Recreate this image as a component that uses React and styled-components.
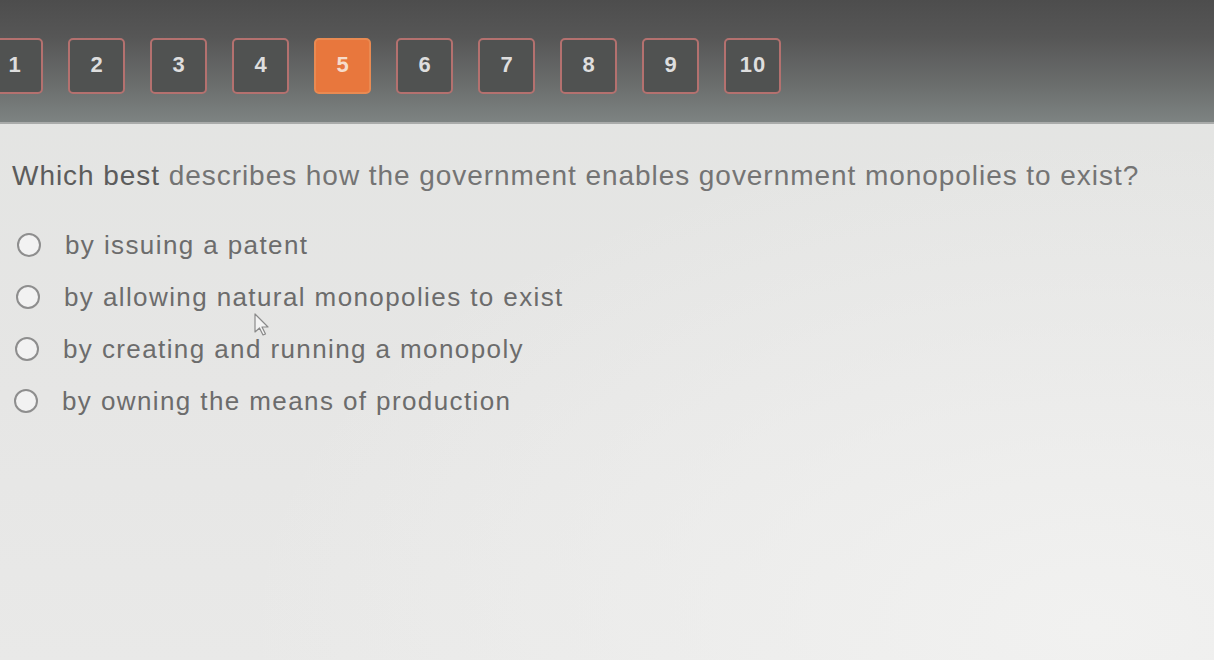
import React from "react";
import styled, { createGlobalStyle } from "styled-components";

const Global = createGlobalStyle`
  html, body { margin: 0; padding: 0; }
  body {
    width: 1214px; height: 660px; overflow: hidden;
    font-family: "Liberation Sans", Arial, sans-serif;
    background: #e4e4e2;
  }
`;

const Page = styled.div`
  position: relative;
  width: 1214px;
  height: 660px;
  display: flex;
  flex-direction: column;
  background:
    radial-gradient(ellipse at 90% 95%, #f1f1f0 0%, rgba(241,241,240,0) 55%),
    linear-gradient(180deg, #e3e4e2 0%, #e6e6e5 60%, #e9e9e8 100%);
`;

const Header = styled.header`
  flex: none;
  background: linear-gradient(180deg, #4d4d4d 0%, #565656 30%, #6b6e6d 70%, #7d8382 100%);
  border-bottom: 2px solid #a9abaa;
  display: flex;
  align-items: flex-start;
  padding-top: 38px;
  box-sizing: border-box;
  height: 124px;
`;

const Nav = styled.nav`
  display: flex;
  gap: 25px;
  margin-left: -14px;
`;

const NumButton = styled.button`
  width: 57px;
  height: 56px;
  box-sizing: border-box;
  border-radius: 5px;
  border: 2px solid ${(p) => (p.$active ? "#e98a52" : "#b4716f")};
  background: ${(p) => (p.$active ? "#e8773d" : "#505251")};
  color: ${(p) => (p.$active ? "#f6dccb" : "#dedede")};
  font-family: "Liberation Sans", Arial, sans-serif;
  font-weight: 700;
  font-size: 22px;
  letter-spacing: 1px;
  display: flex;
  align-items: center;
  justify-content: center;
  padding: 0 0 2px 1px;
`;

const Body = styled.main`
  padding: 35px 0 0 12px;
  display: flex;
  flex-direction: column;
`;

const Question = styled.h1`
  margin: 0;
  font-family: "Liberation Sans", Arial, sans-serif;
  font-weight: 400;
  font-size: 28px;
  line-height: 34px;
  color: #747474;
  letter-spacing: 0.95px;
  white-space: nowrap;
`;

const Dark = styled.span`
  color: #5c5c5c;
`;

const Options = styled.div`
  margin-top: 37px;
  display: flex;
  flex-direction: column;
  gap: 22px;
  margin-left: 5px;
`;

const Option = styled.label`
  display: flex;
  align-items: center;
  gap: 24px;
  height: 30px;
  font-size: 26px;
  color: #6c6c6c;
  letter-spacing: 1.4px;
  white-space: nowrap;
  margin-left: ${(p) => p.$shift || 0}px;
`;

const Radio = styled.span`
  width: 20px;
  height: 20px;
  border-radius: 50%;
  border: 2px solid #8e8e8e;
  background: #f2f2f2;
  flex: none;
`;

const Cursor = styled.svg`
  position: absolute;
  left: 253px;
  top: 312px;
`;

const items = [
  "by issuing a patent",
  "by allowing natural monopolies to exist",
  "by creating and running a monopoly",
  "by owning the means of production",
];

export default function App() {
  return (
    <>
      <Global />
      <Page>
        <Header>
          <Nav>
            {Array.from({ length: 10 }, (_, i) => (
              <NumButton key={i} $active={i === 4}>
                {i + 1}
              </NumButton>
            ))}
          </Nav>
        </Header>
        <Body>
          <Question>
            <Dark>Which best</Dark> describes how the government enables government monopolies to exist?
          </Question>
          <Options>
            {items.map((t, i) => (
              <Option key={t} $shift={-i}>
                <Radio />
                {t}
              </Option>
            ))}
          </Options>
        </Body>
        <Cursor width="22" height="26" viewBox="0 0 22 26">
          <path d="M2 2 L2 20 L6.5 16 L10 23 L12.5 22 L9 15 L15 15 Z" fill="#f3f3f3" stroke="#8a8a8a" strokeWidth="1.2" strokeLinejoin="round" />
        </Cursor>
      </Page>
    </>
  );
}
